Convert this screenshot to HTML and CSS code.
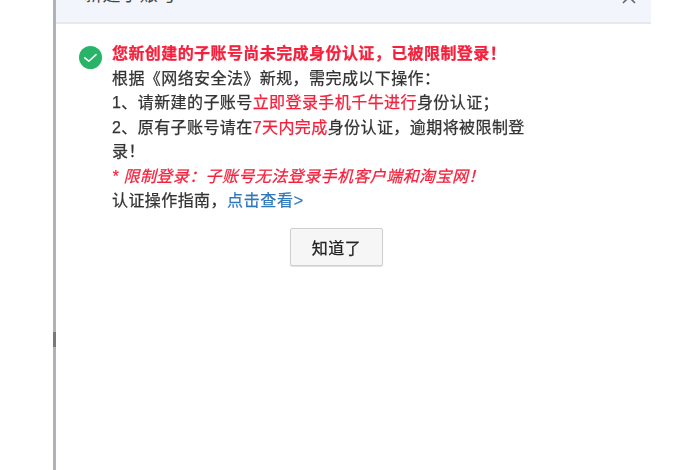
FILE: index.html
```html
<!DOCTYPE html>
<html lang="zh">
<head>
<meta charset="utf-8">
<title>新建子账号</title>
<link rel="stylesheet" href="styles.css">
</head>
<body>
<div class="dialog">
  <span class="edge-mark"></span>
  <header class="head">
    <span class="title">新建子账号</span>
    <svg class="close" width="16" height="16" viewBox="0 0 16 16"><path d="M2 2l12 12M14 2L2 14" stroke="#666" stroke-width="1.6" fill="none"/></svg>
  </header>
  <main class="body">
    <div class="message">
      <svg class="ok" width="23" height="23" viewBox="0 0 24 24"><circle cx="12" cy="12" r="12" fill="#27b466"/><path d="M6 12.5l4.2 3.4 7.6-6.8" stroke="#fff" stroke-width="1.7" fill="none" stroke-linecap="round" stroke-linejoin="round"/></svg>
      <div class="text">
        <p class="line red strong">您新创建的子账号尚未完成身份认证，已被限制登录！</p>
        <p class="line">根据《网络安全法》新规，需完成以下操作：</p>
        <p class="line">1、请新建的子账号<span class="red">立即登录手机千牛进行</span>身份认证；</p>
        <p class="line">2、原有子账号请在<span class="red">7天内完成</span>身份认证，逾期将被限制登录！</p>
        <p class="line red italic">* 限制登录：子账号无法登录手机客户端和淘宝网！</p>
        <p class="line">认证操作指南，<a class="link" href="#">点击查看&gt;</a></p>
      </div>
    </div>
    <div class="actions"><button class="btn" type="button">知道了</button></div>
  </main>
</div>
</body>
</html>
```
FILE: styles.css
```css
html, body {
  margin: 0;
  height: 470px;
  overflow: hidden;
  background: #fff;
}
body {
  font-family: "Liberation Sans", "Noto Sans CJK SC", sans-serif;
  color: #333;
}
.dialog {
  position: relative;
  margin-left: 53px;
  width: 598px;
  height: 470px;
  border-left: 3px solid #b0b2b7;
  box-sizing: border-box;
  filter: blur(0.6px);
}
.edge-mark {
  position: absolute;
  left: -3px;
  top: 332px;
  width: 3px;
  height: 15px;
  background: #77797d;
}
.head {
  height: 22px;
  background: #f2f6fc;
  border-bottom: 2px solid #e6e8ec;
  display: flex;
  justify-content: space-between;
  align-items: flex-end;
  padding: 0 14px 0 28px;
  overflow: hidden;
}
.title {
  font-size: 18px;
  letter-spacing: 0.6px;
  line-height: 20px;
  margin-bottom: 17px;
  color: #444;
  flex: none;
}
.close {
  margin-bottom: 17px;
  flex: none;
}
.body {
  padding: 18px 0 0 23px;
}
.message {
  display: flex;
  align-items: flex-start;
  gap: 10px;
}
.ok {
  flex: none;
  margin-top: 4px;
}
.text {
  width: 416px;
  font-size: 16px;
  line-height: 24.5px;
  letter-spacing: 0.42px;
  -webkit-text-stroke: 0.25px currentColor;
}
.line {
  margin: 0;
}
.red {
  color: #f5213c;
}
.strong {
  font-weight: 700;
}
.italic {
  font-style: italic;
}
.link {
  color: #2d78bd;
  letter-spacing: 0.7px;
  text-decoration: none;
}
.actions {
  margin-top: 14px;
  width: 515px;
  display: flex;
  justify-content: center;
}
.btn {
  width: 93px;
  height: 38px;
  font: 16px "Liberation Sans", "Noto Sans CJK SC", sans-serif;
  letter-spacing: 0.5px;
  -webkit-text-stroke: 0.25px currentColor;
  color: #222;
  background: #f6f6f6;
  border: 1px solid #cfcfcf;
  border-radius: 2px;
  box-shadow: 0 1px 1px rgba(0, 0, 0, .12);
  padding: 0;
}
```
